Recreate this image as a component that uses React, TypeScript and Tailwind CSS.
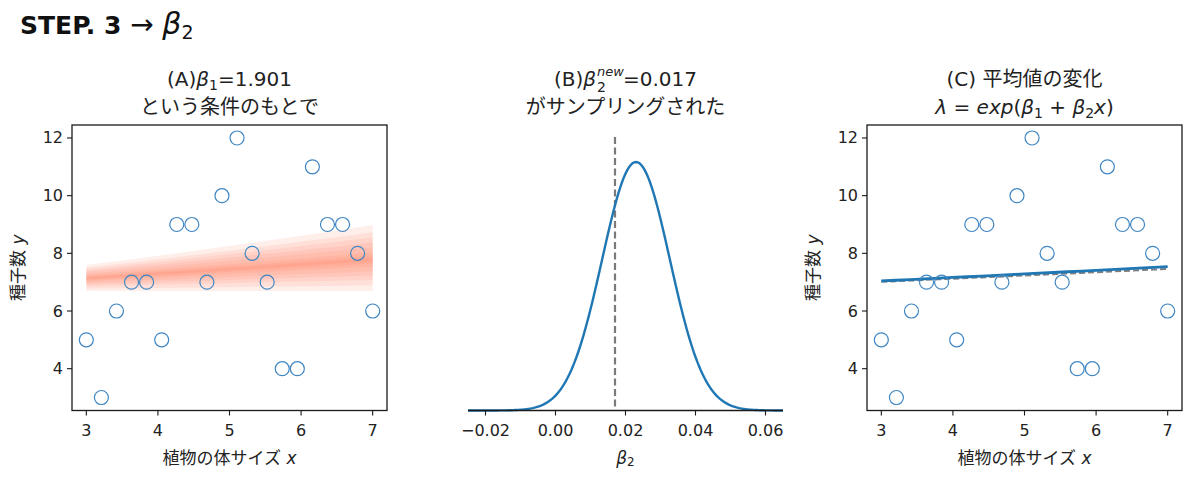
import React from 'react'

// sample data (same scatter for panel A and C)
const XS = Array.from({ length: 20 }, (_, i) => 3 + (i * 4) / 19)
const YS = [5, 3, 6, 7, 7, 5, 9, 9, 7, 10, 12, 8, 7, 4, 4, 11, 9, 9, 8, 6]
const BETA1 = 1.901

const AW = 315
const TOP = 4
const BOT = 289.5
const SVG_H = 358

const sx = (L: number, v: number) => L + ((v - 2.8) * AW) / 4.4
const sy = (v: number) => TOP + ((12.45 - v) * (BOT - TOP)) / 9.9
const lam = (b2: number, x: number) => Math.exp(BETA1 + b2 * x)

// nested credible bands for lambda
const BANDS: [number, number][] = [
  [0, 0.042],
  [0.004, 0.038],
  [0.008, 0.035],
  [0.011, 0.032],
  [0.014, 0.029],
  [0.017, 0.026],
  [0.019, 0.024],
  [0.0205, 0.0225],
]

function bandPoints(L: number, lo: number, hi: number) {
  const n = 12
  const upper: string[] = []
  const lower: string[] = []
  for (let i = 0; i <= n; i++) {
    const x = 3 + (4 * i) / n
    upper.push(`${sx(L, x)},${sy(lam(hi, x))}`)
    lower.unshift(`${sx(L, x)},${sy(lam(lo, x))}`)
  }
  return [...upper, ...lower].join(' ')
}

function linePath(L: number, b2: number) {
  const pts: string[] = []
  for (let i = 0; i <= 20; i++) {
    const x = 3 + (4 * i) / 20
    pts.push(`${i === 0 ? 'M' : 'L'}${sx(L, x)},${sy(lam(b2, x))}`)
  }
  return pts.join(' ')
}

function ScatterAxes({ L, children }: { L: number; children?: React.ReactNode }) {
  return (
    <svg width={400} height={SVG_H} className="block">
      {children}
      {XS.map((x, i) => (
        <circle key={i} cx={sx(L, x)} cy={sy(YS[i])} r={7} fill="none" stroke="#3f86c3" strokeWidth={1.2} />
      ))}
      <rect x={L} y={TOP} width={AW} height={BOT - TOP} fill="none" stroke="#1a1a1a" strokeWidth={1.3} />
      {[3, 4, 5, 6, 7].map((t) => (
        <g key={t}>
          <line x1={sx(L, t)} x2={sx(L, t)} y1={BOT} y2={BOT + 5} stroke="#1a1a1a" strokeWidth={1.1} />
          <text x={sx(L, t)} y={BOT + 20} textAnchor="middle" dominantBaseline="central" className="fill-[#222] text-[16px]">
            {t}
          </text>
        </g>
      ))}
      {[4, 6, 8, 10, 12].map((t) => (
        <g key={t}>
          <line x1={L - 5} x2={L} y1={sy(t)} y2={sy(t)} stroke="#1a1a1a" strokeWidth={1.1} />
          <text x={L - 9} y={sy(t)} textAnchor="end" dominantBaseline="central" className="fill-[#222] text-[16px]">
            {t}
          </text>
        </g>
      ))}
      <text x={L + AW / 2} y={BOT + 47} textAnchor="middle" dominantBaseline="central" className="fill-[#222] text-[17px]">
        植物の体サイズ <tspan className="italic">x</tspan>
      </text>
      <text
        x={L - 54}
        y={(TOP + BOT) / 2}
        textAnchor="middle"
        dominantBaseline="central"
        transform={`rotate(-90 ${L - 54} ${(TOP + BOT) / 2})`}
        className="fill-[#222] text-[17px]"
      >
        種子数 <tspan className="italic">y</tspan>
      </text>
    </svg>
  )
}

function DensityAxes({ L }: { L: number }) {
  const bx = (v: number) => L + ((v + 0.025) * AW) / 0.09
  const pts: string[] = []
  for (let i = 0; i <= 180; i++) {
    const v = -0.025 + (0.09 * i) / 180
    const d = Math.exp(-0.5 * ((v - 0.023) / 0.0097) ** 2)
    pts.push(`${i === 0 ? 'M' : 'L'}${bx(v).toFixed(2)},${(BOT - 248.5 * d).toFixed(2)}`)
  }
  const ticks = [
    { v: -0.02, label: '−0.02' },
    { v: 0, label: '0.00' },
    { v: 0.02, label: '0.02' },
    { v: 0.04, label: '0.04' },
    { v: 0.06, label: '0.06' },
  ]
  return (
    <svg width={400} height={SVG_H} className="block">
      <line x1={bx(0.017)} x2={bx(0.017)} y1={16} y2={BOT} stroke="#7a7a7a" strokeWidth={2.2} strokeDasharray="7 3.5" />
      <path d={pts.join(' ')} fill="none" stroke="#1f77b4" strokeWidth={2.4} />
      <line x1={L} x2={L + AW} y1={BOT} y2={BOT} stroke="#1a1a1a" strokeWidth={1.3} />
      {ticks.map((t) => (
        <g key={t.label}>
          <line x1={bx(t.v)} x2={bx(t.v)} y1={BOT} y2={BOT + 5} stroke="#1a1a1a" strokeWidth={1.1} />
          <text x={bx(t.v)} y={BOT + 20} textAnchor="middle" dominantBaseline="central" className="fill-[#222] text-[16px]">
            {t.label}
          </text>
        </g>
      ))}
      <text x={L + AW / 2} y={BOT + 47} textAnchor="middle" dominantBaseline="central" className="fill-[#222] text-[17px]">
        <tspan className="italic">β</tspan>
        <tspan className="text-[12px]" dy={4}>2</tspan>
      </text>
    </svg>
  )
}

function Title({ L, children }: { L: number; children: React.ReactNode }) {
  return (
    <div className="w-[315px] h-[56px] text-center text-[20px] leading-[28px] text-[#222]" style={{ marginLeft: L }}>
      {children}
    </div>
  )
}

const Beta = ({ sub }: { sub: string }) => (
  <>
    <i>β</i>
    <sub className="text-[14px] not-italic">{sub}</sub>
  </>
)

export default function App() {
  return (
    <div className="w-[1200px] h-[479px] bg-white overflow-hidden font-['DejaVu_Sans','Noto_Sans_CJK_JP',sans-serif] text-[#222]">
      <h1 className="h-[65px] pl-5 pt-[7px] text-[25px] leading-[34px] font-bold text-[#111]">
        STEP. 3 <span className="font-normal text-[28px]">→</span>{' '}
        <span className="font-normal text-[30px]">
          <i>β</i>
          <sub className="text-[19px]">2</sub>
        </span>
      </h1>

      <div className="flex">
        {/* (A) */}
        <div className="w-[400px]">
          <Title L={72}>
            <div>
              (A)<Beta sub="1" />=1.901
            </div>
            <div>という条件のもとで</div>
          </Title>
          <ScatterAxes L={72}>
            {BANDS.map(([lo, hi], i) => (
              <polygon key={i} points={bandPoints(72, lo, hi)} fill="#fb6a4a" fillOpacity={0.11} />
            ))}
          </ScatterAxes>
        </div>

        {/* (B) */}
        <div className="w-[400px]">
          <Title L={68}>
            <div>
              (B)<i>β</i>
              <span className="relative inline-block w-[27px] h-[20px] align-baseline">
                <span className="absolute left-[1px] -top-[1px] text-[13px] leading-none italic">new</span>
                <span className="absolute left-[1px] top-[14px] text-[14px] leading-none">2</span>
              </span>
              =0.017
            </div>
            <div>がサンプリングされた</div>
          </Title>
          <DensityAxes L={68} />
        </div>

        {/* (C) */}
        <div className="w-[400px]">
          <Title L={67}>
            <div>(C) 平均値の変化</div>
            <div>
              <i>λ</i> = <i>exp</i>(<Beta sub="1" /> + <Beta sub="2" />
              <i>x</i>)
            </div>
          </Title>
          <ScatterAxes L={67}>
            <path d={linePath(67, 0.0155)} fill="none" stroke="#7f7f7f" strokeWidth={2} strokeDasharray="6 3" />
            <path d={linePath(67, 0.017)} fill="none" stroke="#1f77b4" strokeWidth={2.8} />
          </ScatterAxes>
        </div>
      </div>
    </div>
  )
}
